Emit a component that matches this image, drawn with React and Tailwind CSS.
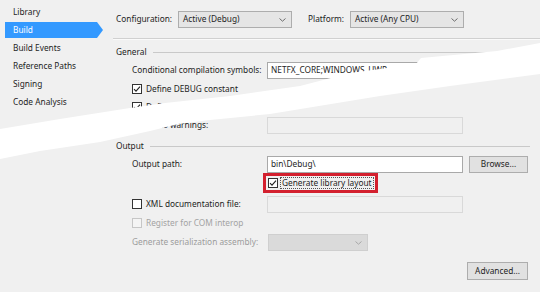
import React from 'react';

const navItems = ['Library', 'Build', 'Build Events', 'Reference Paths', 'Signing', 'Code Analysis'];

function Chevron({ color = '#6b6b6b' }) {
  return (
    <svg width="7" height="4" viewBox="0 0 7 4">
      <path d="M0.5 0.5 L3.5 3.2 L6.5 0.5" fill="none" stroke={color} strokeWidth="1" />
    </svg>
  );
}

function Check({ checked, disabled }) {
  return (
    <span
      className={`w-[10px] h-[10px] shrink-0 border flex items-center justify-center ${
        disabled ? 'border-[#c6c6c6] bg-[#f4f4f4]' : 'border-[#333333] bg-white'
      }`}
    >
      {checked && (
        <svg width="8" height="8" viewBox="0 0 8 8">
          <path d="M1 4.2 L3 6.2 L7 1.6" fill="none" stroke="#222" strokeWidth="1.1" />
        </svg>
      )}
    </span>
  );
}

function Select({ value, width = 'w-[114px]', disabled }) {
  return (
    <div
      className={`${width} h-[17px] border flex items-center justify-between pl-[4px] pr-[5px] ${
        disabled ? 'border-[#cfcfcf] bg-[#dadada]' : 'border-[#adadad] bg-[#e5e5e5]'
      }`}
    >
      <span>{value}</span>
      <Chevron color={disabled ? '#a8a8a8' : '#6b6b6b'} />
    </div>
  );
}

function TextBox({ value, disabled }) {
  return (
    <div
      className={`w-[196px] h-[17px] border flex items-center px-[3px] ${
        disabled ? 'border-[#d9d9d9] bg-[#f0f0f0]' : 'border-[#a9a9a9] bg-white'
      }`}
    >
      {value}
    </div>
  );
}

function Section({ title }) {
  return (
    <div className="h-[10px] flex items-center pl-[3px] pr-[10px]">
      <span>{title}</span>
      <div className="flex-1 ml-[6px] h-px bg-[#c9c9c9]" />
    </div>
  );
}

function Button({ label }) {
  return (
    <div className="w-[59px] h-[17px] border border-[#adadad] bg-[#e1e1e1] flex items-center justify-center">
      {label}
    </div>
  );
}

export default function App() {
  return (
    <div className="relative w-[540px] h-[292px] overflow-hidden bg-[#f0f0f0] text-[#1e1e1e] text-[8.3px] leading-none font-['Noto_Sans',sans-serif] flex">
      {/* left navigation */}
      <div className="w-[113px] shrink-0 pt-[3px] pl-[5px]">
        {navItems.map((item) =>
          item === 'Build' ? (
            <div key={item} className="h-[18px] flex items-center">
              <div className="w-[92px] h-[16px] bg-[#3399ff] text-white flex items-center pl-[8px]">{item}</div>
              <div className="w-0 h-0 border-y-[8px] border-y-transparent border-l-[6px] border-l-[#3399ff]" />
            </div>
          ) : (
            <div key={item} className="h-[18px] flex items-center pl-[8px]">
              {item}
            </div>
          )
        )}
      </div>

      {/* content */}
      <div className="flex-1 flex flex-col pt-[11px]">
        <div className="h-[17px] flex items-center pl-[3px]">
          <span className="w-[62px]">Configuration:</span>
          <Select value="Active (Debug)" />
          <span className="ml-[16px] w-[42px]">Platform:</span>
          <Select value="Active (Any CPU)" />
        </div>
        <div className="mt-[10px] h-[2px] border-t border-t-[#d0d0d0] border-b border-b-[#fafafa]" />

        <div className="mt-[7px]">
          <Section title="General" />
        </div>
        <div className="mt-[5px] h-[17px] flex items-center pl-[19px]">
          <span className="w-[135px]">Conditional compilation symbols:</span>
          <TextBox value="NETFX_CORE;WINDOWS_UWP" />
        </div>
        <div className="mt-[1px] h-[18px] flex items-center pl-[19px] gap-[4px]">
          <Check checked />
          <span>Define DEBUG constant</span>
        </div>
        <div className="h-[18px] flex items-center pl-[19px] gap-[4px]">
          <Check checked />
          <span>Define TRACE constant</span>
        </div>
        <div className="mt-[1px] h-[17px] flex items-center pl-[19px]">
          <span className="w-[135px]">Suppress warnings:</span>
          <TextBox disabled />
        </div>

        <div className="mt-[7px]">
          <Section title="Output" />
        </div>
        <div className="mt-[5px] h-[17px] flex items-center pl-[19px]">
          <span className="w-[135px]">Output path:</span>
          <TextBox value="bin\Debug\" />
          <div className="ml-[6px]">
            <Button label="Browse..." />
          </div>
        </div>
        <div className="h-[20px] flex items-center pl-[150px]">
          <div className="h-[20px] border-[3px] border-[#d3202e] flex items-center pl-[2px] pr-px gap-[2px]">
            <Check checked />
            <span className="h-[12px] px-px border border-dotted border-[#555] flex items-center">Generate library layout</span>
          </div>
        </div>
        <div className="mt-[2px] h-[18px] flex items-center pl-[19px]">
          <span className="w-[135px] flex items-center gap-[4px]">
            <Check />
            <span>XML documentation file:</span>
          </span>
          <TextBox disabled />
        </div>
        <div className="mt-[1px] h-[18px] flex items-center pl-[19px] gap-[4px] text-[#a3a3a3]">
          <Check disabled />
          <span>Register for COM interop</span>
        </div>
        <div className="mt-[2px] h-[17px] flex items-center pl-[19px] text-[#9c9c9c]">
          <span className="w-[136px]">Generate serialization assembly:</span>
          <Select value="" width="w-[100px]" disabled />
        </div>
        <div className="mt-[11px] flex justify-end pr-[12px]">
          <div className="w-[61px] h-[18px] border border-[#adadad] bg-[#e1e1e1] flex items-center justify-center">
            Advanced...
          </div>
        </div>
      </div>

      {/* torn paper overlay */}
      <svg className="absolute inset-0 pointer-events-none" width="540" height="292" viewBox="0 0 540 292">
        <polygon
          fill="#ffffff"
          points="0,129 60,119 130,108 165,103 230,96 300,86 350,73 380,69 416,64 421,58 497,51 540,43 540,74 450,86 380,96 270,114 210,120 178,124 150,131 100,142 40,151 0,159"
        />
      </svg>
    </div>
  );
}
